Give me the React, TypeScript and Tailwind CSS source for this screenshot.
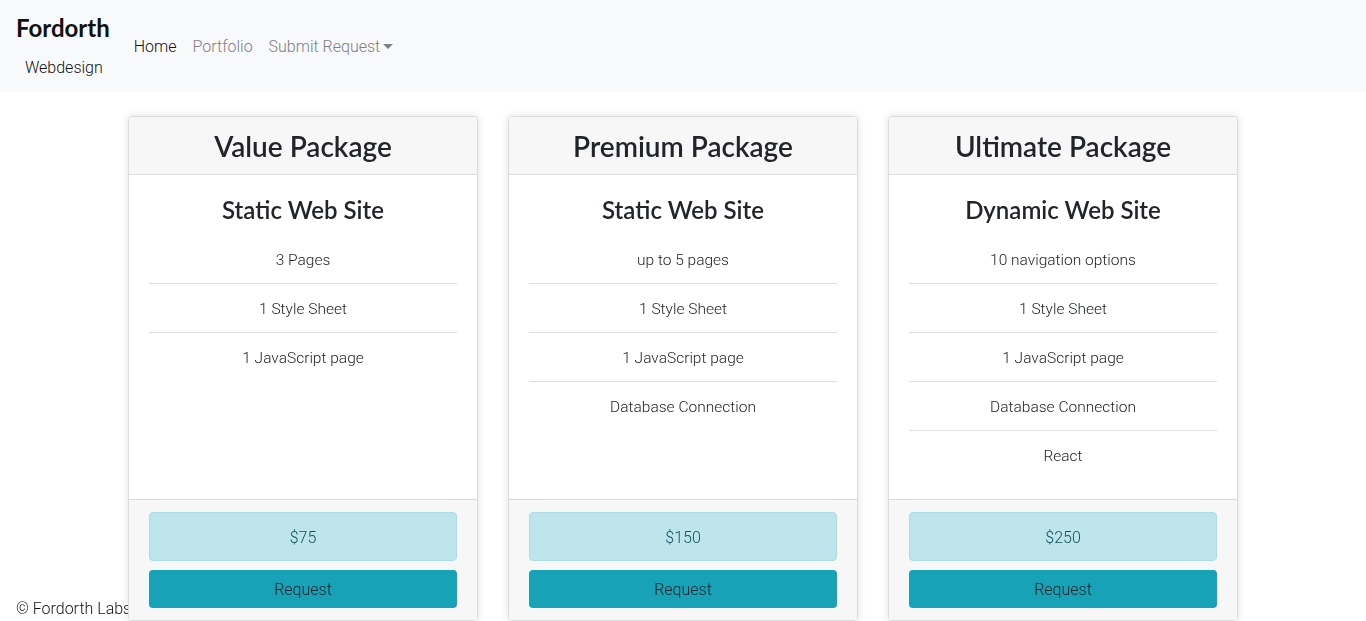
import React from 'react';

const packages = [
  {
    title: 'Value Package',
    subtitle: 'Static Web Site',
    items: ['3 Pages', '1 Style Sheet', '1 JavaScript page'],
    price: '$75',
  },
  {
    title: 'Premium Package',
    subtitle: 'Static Web Site',
    items: ['up to 5 pages', '1 Style Sheet', '1 JavaScript page', 'Database Connection'],
    price: '$150',
  },
  {
    title: 'Ultimate Package',
    subtitle: 'Dynamic Web Site',
    items: ['10 navigation options', '1 Style Sheet', '1 JavaScript page', 'Database Connection', 'React'],
    price: '$250',
  },
];

const App = () => {
  return (
    <div className="min-h-screen bg-white text-[#212529] font-['Roboto',sans-serif] font-light">
      {/* Navbar */}
      <nav className="bg-[#f8f9fa] h-[92px] flex items-start px-4">
        <div className="flex flex-col items-center pt-[12px]">
          <span className="font-['Lato',sans-serif] font-bold text-[24px] leading-[32px] text-[#111]">Fordorth</span>
          <span className="text-[16px] leading-[24px] mt-[12px] ml-[2px] text-[#111]">Webdesign</span>
        </div>
        <ul className="flex items-center gap-4 ml-[24px] mt-[35px] text-[16px] leading-[24px]">
          <li className="text-[#111]">Home</li>
          <li className="text-[#7f8081]">Portfolio</li>
          <li className="text-[#7f8081] flex items-center">
            Submit Request
            <span className="ml-[3px] inline-block w-0 h-0 border-l-[5px] border-r-[5px] border-t-[5px] border-l-transparent border-r-transparent border-t-[#7f8081] mb-[1px]"></span>
          </li>
        </ul>
      </nav>

      {/* Packages */}
      <div className="relative z-10 w-[1110px] mx-auto mt-[24px] grid grid-cols-3 gap-[30px]">
        {packages.map((pkg, index) => (
          <div key={index} className="flex flex-col bg-white border border-[#dcdcdc] rounded-[4px] shadow-[0_0_8px_rgba(0,0,0,0.12)] overflow-hidden">
            <div className="bg-[#f7f7f7] border-b border-[#dcdcdc] h-[58px] flex items-center justify-center">
              <h2 className="font-['Lato',sans-serif] font-semibold text-[28px] leading-[34px] text-[#212529]">{pkg.title}</h2>
            </div>
            <div className="flex-1 px-[20px] pt-[20px] pb-[20px] h-[324px]">
              <h3 className="font-['Lato',sans-serif] font-semibold text-[24px] leading-[29px] text-center mb-[11px]">{pkg.subtitle}</h3>
              <ul>
                {pkg.items.map((item, idx) => (
                  <li
                    key={idx}
                    className={`text-center text-[15.5px] leading-[24px] pt-[13px] pb-[11px] ${idx > 0 ? 'border-t border-[#dedede]' : ''}`}
                  >
                    {item}
                  </li>
                ))}
              </ul>
            </div>
            <div className="bg-[#f7f7f7] border-t border-[#dcdcdc] px-[20px] pt-[12px] pb-[12px] flex flex-col gap-[9px]">
              <div className="h-[49px] pt-[2px] bg-[#bee5eb] border border-[#abdde5] rounded-[4px] flex items-center justify-center text-[#0c5460] text-[16px]">
                {pkg.price}
              </div>
              <button className="h-[38px] pt-[2px] bg-[#17a2b8] rounded-[4px] text-[16px] text-[#212529] font-light">Request</button>
            </div>
          </div>
        ))}
      </div>

      {/* Footer */}
      <footer className="fixed bottom-0 left-0 z-0 pl-4 pb-0 text-[16px] leading-[24px] text-[#111]">
        © Fordorth Labs
      </footer>
    </div>
  );
};

export default App;
